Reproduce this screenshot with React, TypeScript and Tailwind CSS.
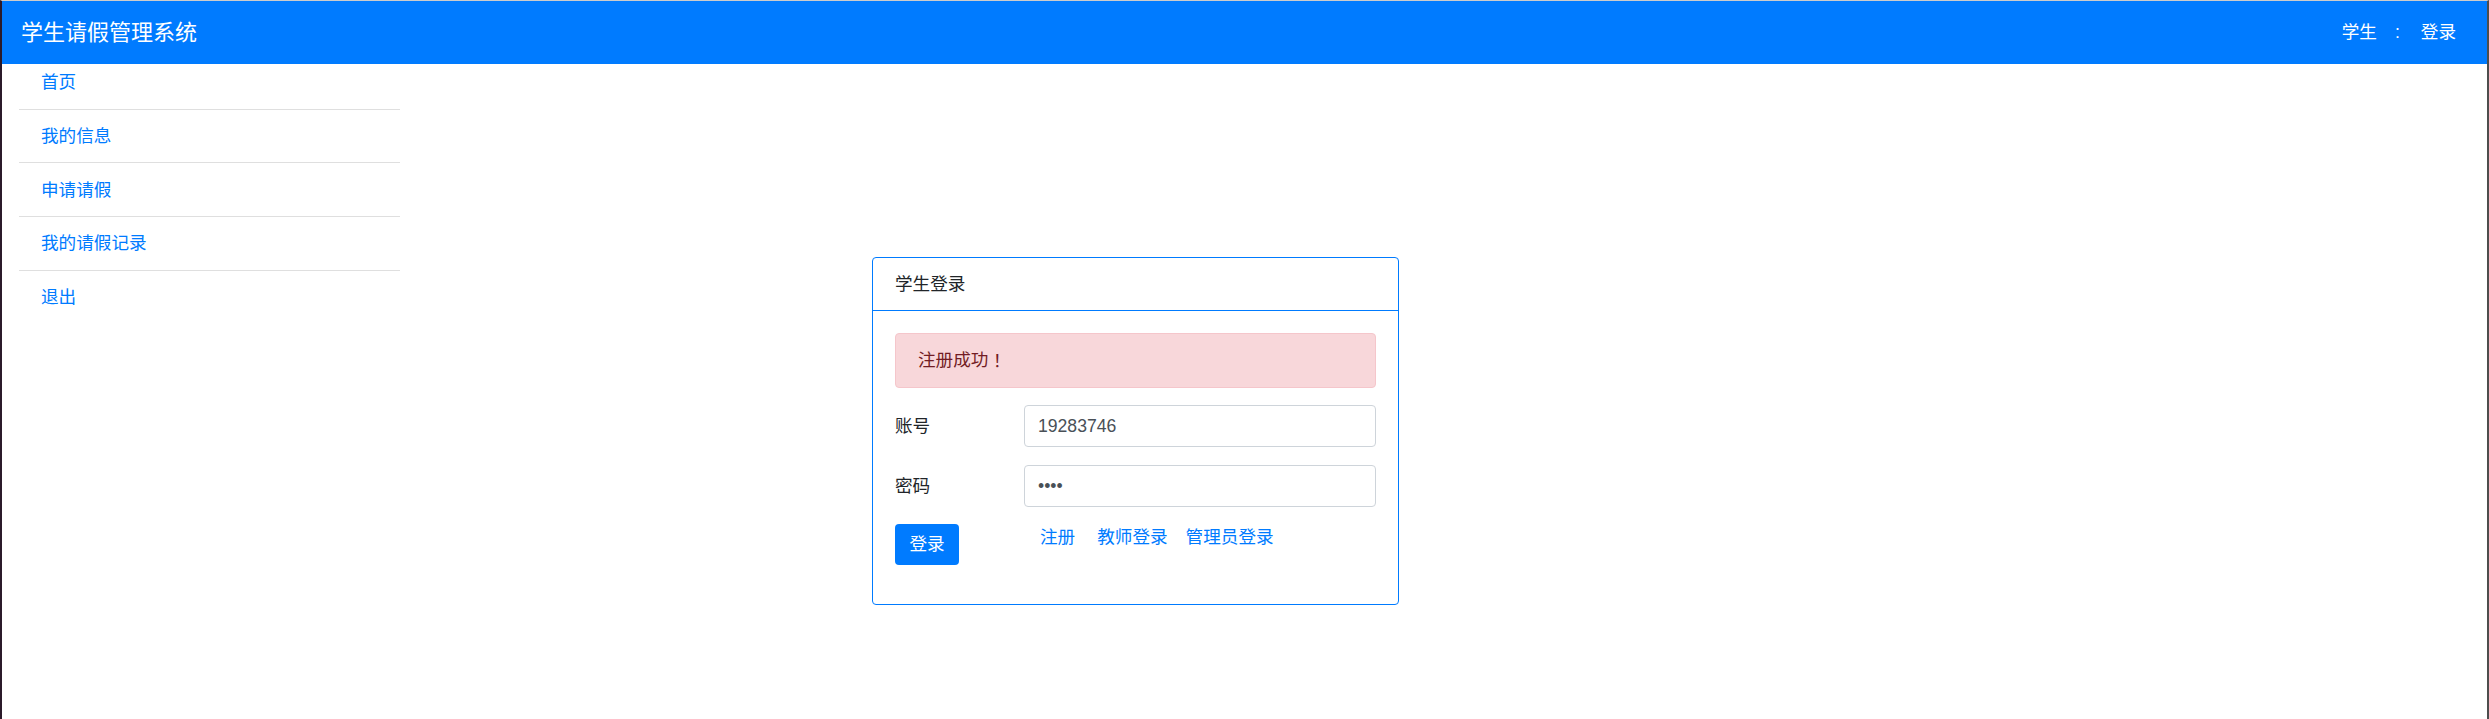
import React from 'react';

const MENU = ['首页', '我的信息', '申请请假', '我的请假记录', '退出'];

const Sidebar = () => (
  <ul className="ml-[17px] w-[381px]">
    {MENU.map((m, i) => (
      <li
        key={m}
        className={`px-[22px] text-[17.6px] leading-[26.4px] text-[#007bff] ${i === 0 ? 'pt-[5px] pb-[13.2px]' : 'py-[13.2px]'} ${i < MENU.length - 1 ? 'border-b border-[#dfdfdf]' : ''}`}
      >
        <a href="#">{m}</a>
      </li>
    ))}
  </ul>
);

const LoginCard = () => (
  <div className="ml-[472px] mt-[193px] w-[527px] rounded-[4px] border border-[#007bff]">
    <div className="flex h-[53px] items-center border-b border-[#007bff] px-[22px] text-[17.6px] text-[#212529]">
      学生登录
    </div>
    <div className="px-[22px] pt-[22px] pb-[39px]">
      <div className="mb-[17px] flex h-[55px] items-center rounded-[4px] border border-[#f5c6cb] bg-[#f8d7da] px-[22px] text-[17.6px] text-[#721c24]">
        注册成功<span className="font-['Noto_Sans_CJK_TC',sans-serif]">！</span>
      </div>
      <div className="grid grid-cols-[129px_1fr] items-center">
        <label className="text-[17.6px] text-[#212529]">账号</label>
        <input
          readOnly
          value="19283746"
          className="h-[42px] w-full rounded-[4px] border border-[#ced4da] px-[13px] text-[17.6px] text-[#495057] outline-none"
        />
        <div className="col-span-2 h-[18px]" />
        <label className="text-[17.6px] text-[#212529]">密码</label>
        <input
          readOnly
          type="password"
          value="1234"
          className="h-[42px] w-full rounded-[4px] border border-[#ced4da] px-[13px] text-[17.6px] text-[#495057] outline-none"
        />
        <div className="col-span-2 h-[17px]" />
        <div className="self-start">
          <button className="h-[41px] w-[64px] rounded-[4px] bg-[#007bff] text-[17.6px] text-white">登录</button>
        </div>
        <div className="flex self-start text-[17.6px] leading-[26.4px] text-[#007bff]">
          <a href="#" className="ml-[16px]">注册</a>
          <a href="#" className="ml-[22px]">教师登录</a>
          <a href="#" className="ml-[18px]">管理员登录</a>
        </div>
      </div>
    </div>
  </div>
);

export default function App() {
  return (
    <div className="h-[719px] w-full overflow-hidden border-t border-l-2 border-r-2 border-t-[#cccccc] border-l-[#2b1a2a] border-r-[#4d4d4d] bg-white font-['Liberation_Sans','Noto_Sans_CJK_SC',sans-serif]">
      <nav className="flex h-[63px] items-center justify-between bg-[#007bff] pl-[19px] pr-[31px] text-white">
        <span className="text-[22px]">学生请假管理系统</span>
        <div className="flex items-center text-[17.6px]">
          <span>学生</span>
          <span className="ml-[18px] mr-[21px]">:</span>
          <a href="#">登录</a>
        </div>
      </nav>
      <div className="flex items-start">
        <Sidebar />
        <LoginCard />
      </div>
    </div>
  );
}
